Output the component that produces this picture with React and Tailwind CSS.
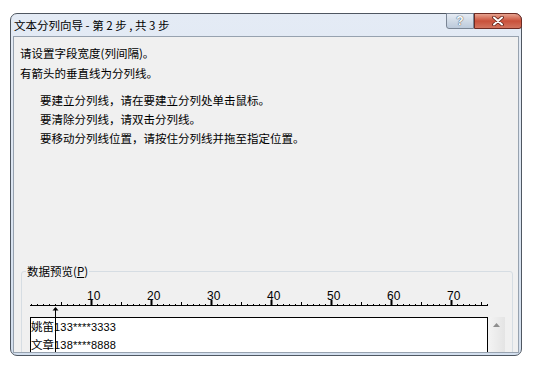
import React from "react";

const cjk = '"Noto Sans CJK SC", "Liberation Sans", sans-serif';

function Ruler() {
  const ticks = [];
  for (let i = 0; i <= 76; i++) {
    const x = 1 + 6 * i;
    if (i % 10 === 0 && i > 0) {
      ticks.push(<rect key={i} x={x - 0.5} y={2} width={2} height={5} fill="#000" />);
    } else if (i % 5 === 0 && i > 0) {
      ticks.push(<rect key={i} x={x} y={4} width={1} height={3} fill="#000" />);
    } else {
      ticks.push(<rect key={i} x={x} y={6} width={1} height={1} fill="#000" />);
    }
  }
  const labels = [10, 20, 30, 40, 50, 60, 70];
  return (
    <div className="relative ml-[8px] h-[45px]">
      {labels.map((n) => (
        <span
          key={n}
          className="absolute top-[18px] text-[12px] leading-[12px] text-black font-['Liberation_Sans',sans-serif]"
          style={{ left: `${6 * n - 3}px` }}
        >
          {n}
        </span>
      ))}
      <svg className="absolute left-0 top-[26px]" width="460" height="10">
        <rect x={0} y={7} width={458} height={1} fill="#000" />
        {ticks}
      </svg>
    </div>
  );
}

export default function App() {
  return (
    <div className="w-[541px] h-[370px] bg-white pt-[13px] pl-[10px]">
      <div className="relative w-[512px] h-[343px] border border-[#4f5761] rounded-t-[7px] rounded-b-[7px] bg-gradient-to-b from-[#e4ebf5] to-[#d3dfee] px-[2px] pb-[2px] flex flex-col">
        <div
          className="h-[22px] flex items-center pl-[1px] text-[11.5px] leading-[14px] text-black"
          style={{ fontFamily: cjk }}
        >
          文本分列向导 - 第 2 步 , 共 3 步
        </div>

        <div className="absolute top-[-1px] left-[435px] w-[28px] h-[16px] rounded-bl-[3px] border border-[#7a8594] bg-gradient-to-b from-[#e6ecf4] via-[#d0dae6] to-[#bccadb] flex items-center justify-center">
          <span className="text-[12px] leading-[12px] font-bold text-white font-['Liberation_Sans',sans-serif] [text-shadow:0_0_1px_#3c4a5c,0_0_1px_#3c4a5c]">
            ?
          </span>
        </div>
        <div className="absolute top-[-1px] right-[-1px] w-[48px] h-[16px] rounded-tr-[7px] rounded-br-[3px] border border-[#6e2a22] bg-gradient-to-b from-[#e6a28f] via-[#c9503a] to-[#d2735e] flex items-center justify-center">
          <svg width="12" height="10" viewBox="0 0 12 10">
            <path d="M2 1.5 L10 8.5 M10 1.5 L2 8.5" stroke="#5a1d14" strokeWidth="3.6" strokeLinecap="round" />
            <path d="M2 1.5 L10 8.5 M10 1.5 L2 8.5" stroke="#ffffff" strokeWidth="2" strokeLinecap="round" />
          </svg>
        </div>

        <div className="flex-1 border border-[#97a2af] bg-[#f0f0f0] overflow-hidden flex flex-col">
          <div
            className="pt-[6px] pl-[6px] text-[11.5px] leading-[20px] text-black"
            style={{ fontFamily: cjk }}
          >
            <div>请设置字段宽度(列间隔)。</div>
            <div>有箭头的垂直线为分列线。</div>
          </div>
          <div
            className="mt-[8px] pl-[26px] text-[11.5px] leading-[19px] text-black"
            style={{ fontFamily: cjk }}
          >
            <div>要建立分列线，请在要建立分列处单击鼠标。</div>
            <div>要清除分列线，请双击分列线。</div>
            <div>要移动分列线位置，请按住分列线并拖至指定位置。</div>
          </div>

          <div className="relative mt-[123px] ml-[7px] w-[492px] h-[120px] border border-[#d6dde3] rounded-[3px]">
            <span
              className="absolute left-[4px] top-[-8px] px-[1px] bg-[#f0f0f0] text-[11.5px] leading-[14px] text-black"
              style={{ fontFamily: cjk }}
            >
              数据预览(<span className="underline">P</span>)
            </span>
            <Ruler />
            <div className="flex ml-[8px]">
              <div className="w-[458px] h-[60px] border border-black bg-white text-[11.5px] leading-[17px] text-black">
                <div>
                  <span style={{ fontFamily: cjk }}>姚笛</span>
                  <span className="text-[11px] font-['Liberation_Sans',sans-serif] tracking-[0.2px]">133****3333</span>
                </div>
                <div>
                  <span style={{ fontFamily: cjk }}>文章</span>
                  <span className="text-[11px] font-['Liberation_Sans',sans-serif] tracking-[0.2px]">138****8888</span>
                </div>
              </div>
              <div className="w-[17px] h-[60px] bg-gradient-to-r from-[#f4f4f4] via-[#ececec] to-[#e4e4e4] flex justify-center pt-[6px]">
                <svg width="7" height="4" viewBox="0 0 7 4">
                  <polygon points="3.5,0 7,4 0,4" fill="#8e8e8e" />
                </svg>
              </div>
            </div>
            <svg className="absolute left-[30px] top-[35px]" width="7" height="60">
              <polygon points="3.5,0 6.5,3.5 0.5,3.5" fill="#000" />
              <rect x={3} y={3} width={1} height={57} fill="#000" />
            </svg>
          </div>
        </div>
      </div>
    </div>
  );
}
